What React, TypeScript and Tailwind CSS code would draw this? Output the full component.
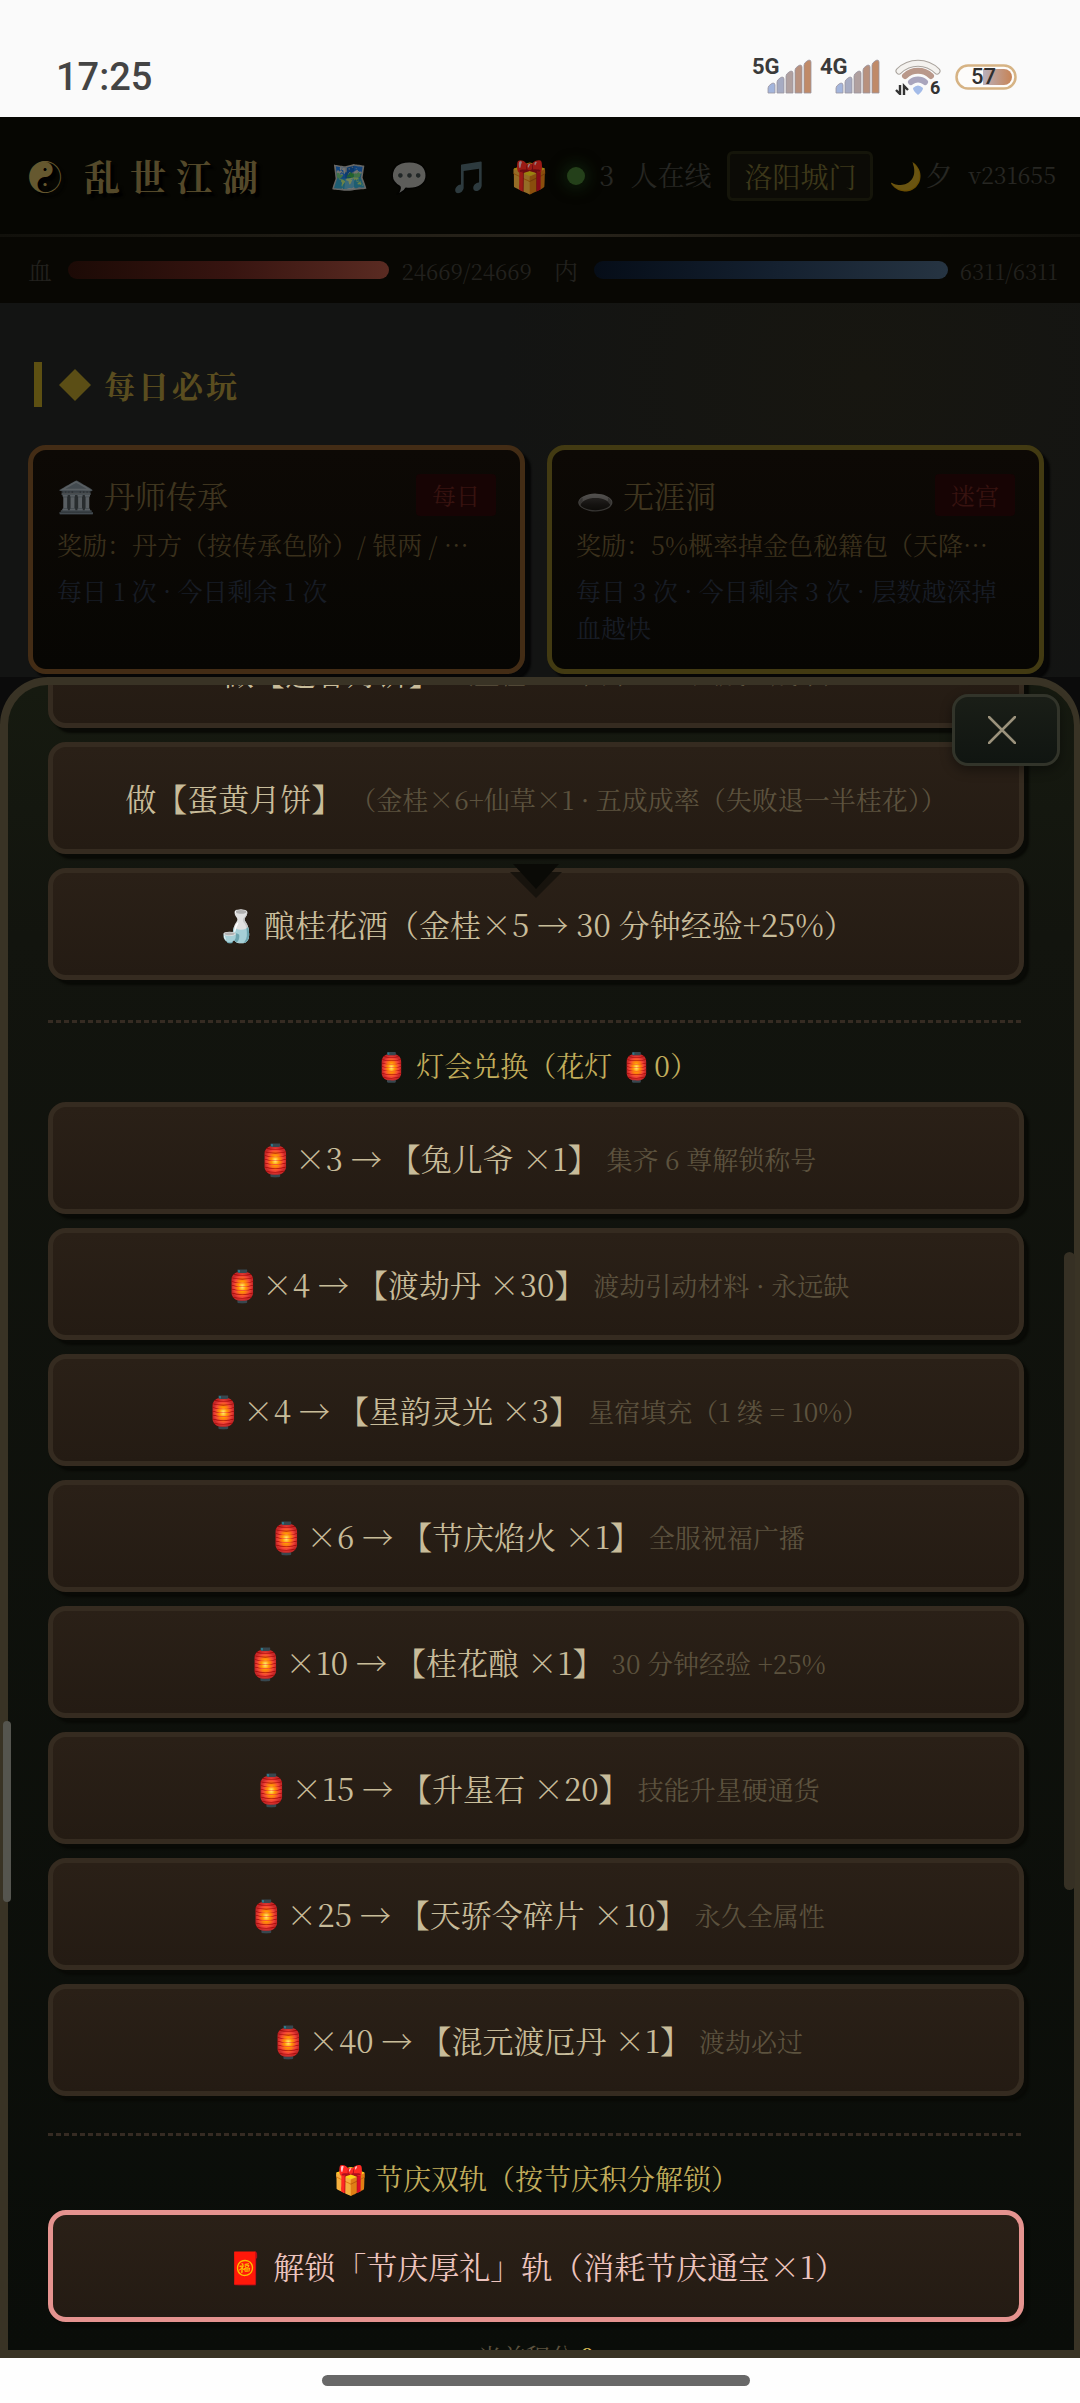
import type { ReactNode } from "react";

interface Offer {
  cost: string;
  reward: string;
  note: string;
}

const OFFERS: Offer[] = [
  { cost: "×3", reward: "兔儿爷 ×1", note: "集齐 6 尊解锁称号" },
  { cost: "×4", reward: "渡劫丹 ×30", note: "渡劫引动材料 · 永远缺" },
  { cost: "×4", reward: "星韵灵光 ×3", note: "星宿填充（1 缕 = 10%）" },
  { cost: "×6", reward: "节庆焰火 ×1", note: "全服祝福广播" },
  { cost: "×10", reward: "桂花酿 ×1", note: "30 分钟经验 +25%" },
  { cost: "×15", reward: "升星石 ×20", note: "技能升星硬通货" },
  { cost: "×25", reward: "天骄令碎片 ×10", note: "永久全属性" },
  { cost: "×40", reward: "混元渡厄丹 ×1", note: "渡劫必过" },
];

const SIGNAL_BARS = [
  { color: "#a3b5dc", top: 25 },
  { color: "#a6abc2", top: 19 },
  { color: "#b0a09f", top: 13 },
  { color: "#b8917e", top: 7 },
  { color: "#c08a68", top: 2 },
];

function Signal({ label }: { label: string }) {
  return (
    <div className="relative h-9 w-[60px] font-['Roboto',sans-serif] text-[#3a3a3a]">
      <svg viewBox="0 0 60 36" className="h-9 w-[60px]" aria-hidden="true">
        {SIGNAL_BARS.map(({ color, top }, i) => {
          const x = 16 + i * 9;
          return (
            <path
              key={color}
              d={`M${x} 34 V${top + 4} Q${x} ${top + 2} ${x + 3} ${top} L${x + 5} ${top - 1} Q${x + 7} ${top - 1} ${x + 7} ${top + 1} V34 Z`}
              fill={color}
              stroke="#9a94a0"
              strokeWidth="0.8"
            />
          );
        })}
      </svg>
      <span className="absolute -top-1 left-0 text-[22px] leading-6 font-bold">{label}</span>
    </div>
  );
}

function Wifi() {
  return (
    <div className="relative h-9 w-[46px] font-['Roboto',sans-serif] text-[#333]">
      <svg viewBox="0 0 46 36" className="h-9 w-[46px]" role="img" aria-label="Wi-Fi">
        <path d="M4 12 A27 27 0 0 1 42 12" fill="none" stroke="#aaa49e" strokeWidth="7" strokeLinecap="round" />
        <path d="M4 12 A27 27 0 0 1 42 12" fill="none" stroke="#f4f2ef" strokeWidth="5" strokeLinecap="round" />
        <path d="M10 17 A19 19 0 0 1 36 17" fill="none" stroke="#b9988a" strokeWidth="6" strokeLinecap="round" />
        <path d="M16 23 A11 11 0 0 1 30 23" fill="none" stroke="#a9a5bd" strokeWidth="6" strokeLinecap="round" />
        <path d="M18 29 Q23 24 28 29 Q28 32 23 36 Q18 32 18 29 Z" fill="#a3bbe8" />
        <path d="M5 26 V35 L1 31 M9 36 V27 L13 31" fill="none" stroke="#333" strokeWidth="2.4" />
      </svg>
      <span className="absolute top-[19px] left-[35px] text-lg leading-5 font-bold">6</span>
    </div>
  );
}

function Battery() {
  return (
    <div className="relative h-[26px] w-[62px] font-['Roboto',sans-serif] text-[#2f2f2f]">
      <svg viewBox="0 0 62 26" className="h-[26px] w-[62px]" aria-hidden="true">
        <defs>
          <linearGradient id="charge">
            <stop offset="0" stopColor="#b9b0bb" />
            <stop offset="1" stopColor="#c78355" />
          </linearGradient>
        </defs>
        <rect x="1.5" y="1.5" width="59" height="23" rx="11.5" fill="#fdfcfa" stroke="#d6b384" strokeWidth="2.5" />
        <path d="M28 5 H49 A8 8 0 0 1 49 21 H28 Z" fill="url(#charge)" />
      </svg>
      <span className="absolute top-0 left-4 text-[22px] leading-[25px] font-medium">57</span>
    </div>
  );
}

function StatusBar() {
  return (
    <div className="flex h-[117px] shrink-0 items-center justify-between bg-[#fafafa] pt-9 pr-[63px] pl-14">
      <span className="font-['Roboto',sans-serif] text-[38px] leading-none font-medium text-[#444]">17:25</span>
      <div className="flex items-center">
        <Signal label="5G" />
        <span className="w-2" />
        <Signal label="4G" />
        <span className="w-[15px]" />
        <Wifi />
        <span className="w-[14px]" />
        <Battery />
      </div>
    </div>
  );
}

function Header() {
  return (
    <header className="shrink-0 bg-[#060602]">
      <div className="flex h-[117px] items-center justify-between pr-6 pl-7">
        <h1 className="flex items-center gap-[22px] text-4xl font-bold text-[#54492a] [text-shadow:4px_4px_2px_#000]">
          <span className="text-[34px] font-normal text-[#65582f]">☯</span>
          <span className="tracking-[10px]">乱世江湖</span>
        </h1>
        <div className="flex items-center text-[27px] whitespace-nowrap text-[#272723]">
          <nav className="flex gap-[21px] text-[31px]">
            <button type="button" aria-label="地图" className="opacity-50">🗺️</button>
            <button type="button" aria-label="聊天" className="opacity-35">💬</button>
            <button type="button" aria-label="音乐" className="opacity-50">🎵</button>
            <button type="button" aria-label="礼包" className="opacity-60">🎁</button>
          </nav>
          <span className="ml-[18px] size-[18px] rounded-full bg-[#24401a] shadow-[0_0_14px_4px_#0d1c0a]" />
          <span className="ml-[14px]">3</span>
          <span className="ml-4">人在线</span>
          <button
            type="button"
            className="ml-4 rounded-md border-[3px] border-[#15150a] bg-[#0c0b06] px-[14px] text-[28px] leading-[44px] text-[#3d381a]"
          >
            洛阳城门
          </button>
          <span className="ml-4 flex items-center gap-[2px]">
            <span className="opacity-40">🌙</span>
            <span>夕</span>
          </span>
          <span className="ml-4 text-[23px]">v231655</span>
        </div>
      </div>
      <div className="h-[3px] bg-linear-to-r from-[#11100b] via-[#29241b] to-[#11100b]" />
    </header>
  );
}

function Vitals() {
  return (
    <div className="flex h-[66px] shrink-0 items-center gap-[22px] bg-[#080703] pr-[22px] pl-7 text-[22px] text-[#22211e]">
      <div className="flex flex-[503] items-center">
        <span className="text-2xl">血</span>
        <div className="ml-4 h-[18px] flex-1 rounded-full bg-linear-to-r from-[#1c0a06] via-[#371410] to-[#5a2b22]" />
        <span className="ml-3">24669/24669</span>
      </div>
      <div className="flex flex-[503] items-center">
        <span className="text-2xl">内</span>
        <div className="ml-4 h-[18px] flex-1 rounded-full bg-linear-to-r from-[#060d18] via-[#14202f] to-[#263442]" />
        <span className="ml-3">6311/6311</span>
      </div>
    </div>
  );
}

interface DailyCardProps {
  icon: string;
  title: string;
  tag: string;
  reward: string;
  limit: string;
  frame: string;
}

function DailyCard({ icon, title, tag, reward, limit, frame }: DailyCardProps) {
  return (
    <article
      className={`h-[229px] min-w-0 flex-1 rounded-[18px] border-[5px] bg-linear-to-b from-[#0d0905] to-[#070603] px-6 pt-6 shadow-[6px_6px_2px_#060606] ${frame}`}
    >
      <div className="flex items-center justify-between">
        <h3 className="flex items-center gap-2 text-[31px] leading-[42px] text-[#3f351f]">
          <span className="opacity-40">{icon}</span>
          {title}
        </h3>
        <span className="rounded bg-[#170404] px-4 text-2xl leading-[42px] text-[#381310]">{tag}</span>
      </div>
      <p className="mt-[10px] mr-3 truncate text-[25px] leading-9 text-[#3a301c]">{reward}</p>
      <p className="mt-[10px] text-[25px] leading-[37px] text-[#181d26]">{limit}</p>
    </article>
  );
}

function DailySection() {
  return (
    <main className="shrink-0 bg-[#131413] bg-[radial-gradient(circle_at_80%_20%,#171610,transparent_40%)] pr-9 pb-[3px] pl-7">
      <div className="flex items-center pt-[59px] pl-[6px]">
        <span className="h-[45px] w-2 bg-[#5d5012]" />
        <svg viewBox="0 0 32 32" className="ml-[17px] size-8" aria-hidden="true">
          <path d="M16 0 L32 16 L16 32 L0 16 Z" fill="#5b4e15" />
        </svg>
        <h2 className="ml-[13px] text-[31px] leading-[45px] font-bold tracking-[3px] text-[#5a4d1f]">每日必玩</h2>
      </div>
      <div className="mt-[38px] flex gap-[22px]">
        <DailyCard
          icon="🏛️"
          title="丹师传承"
          tag="每日"
          reward="奖励：丹方（按传承色阶）/ 银两 / 丹药材料"
          limit="每日 1 次 · 今日剩余 1 次"
          frame="border-[#432c15]"
        />
        <DailyCard
          icon="🕳️"
          title="无涯洞"
          tag="迷宫"
          reward="奖励：5%概率掉金色秘籍包（天降秘籍）"
          limit="每日 3 次 · 今日剩余 3 次 · 层数越深掉血越快"
          frame="border-[#423a12]"
        />
      </div>
    </main>
  );
}

function ActionButton({ children, tone = "border-[#352b20] text-[#c8bc9a]" }: { children: ReactNode; tone?: string }) {
  return (
    <button
      type="button"
      className={`flex h-28 w-full shrink-0 items-center justify-center rounded-[18px] border-[5px] bg-linear-to-b from-[#2a2017] to-[#241b13] text-[31px] whitespace-pre shadow-[5px_5px_2px_#090a06] ${tone}`}
    >
      {children}
    </button>
  );
}

function Note({ children }: { children: ReactNode }) {
  return <span className="ml-2 text-[26px] text-[#5c523e]">{children}</span>;
}

function Divider() {
  return <div role="separator" className="h-[3px] bg-[repeating-linear-gradient(90deg,#352b22_0_5px,transparent_5px_8px)]" />;
}

function FestivalSheet() {
  return (
    <section
      role="dialog"
      aria-label="节庆兑换"
      className="relative min-h-0 flex-1 rounded-t-[48px] border-8 border-r-[6px] border-[#393325] bg-linear-to-b from-[#161a10] via-[#12140e] via-15% to-[#0a0d09]"
    >
      <div className="h-full overflow-hidden pr-[50px] pl-10">
        <div className="-mt-[69px] flex flex-col gap-[14px]">
          <ActionButton>
            做【莲蓉月饼】<Note>（金桂×4+仙草×1 · 八成五成率）</Note>
          </ActionButton>
          <ActionButton>
            做【蛋黄月饼】<Note>（金桂×6+仙草×1 · 五成成率（失败退一半桂花））</Note>
          </ActionButton>
          <ActionButton>🍶 酿桂花酒（金桂×5 → 30 分钟经验+25%）</ActionButton>
        </div>

        <div className="mt-10">
          <Divider />
          <h2 className="mt-[21px] mb-4 text-center text-[28px] leading-[42px] text-[#c3ae5c]">
            🏮 灯会兑换（花灯 🏮0）
          </h2>
          <div className="flex flex-col gap-[14px]">
            {OFFERS.map((offer) => (
              <ActionButton key={offer.reward}>
                {`🏮${offer.cost} → 【${offer.reward}】`}
                <Note>{offer.note}</Note>
              </ActionButton>
            ))}
          </div>
        </div>

        <div className="mt-[37px]">
          <Divider />
          <h2 className="mt-[21px] mb-[11px] text-center text-[28px] leading-[42px] text-[#c3ae5c]">
            🎁 节庆双轨（按节庆积分解锁）
          </h2>
          <ActionButton tone="border-[#e5938f] text-[#ecc3bd]">🧧 解锁「节庆厚礼」轨（消耗节庆通宝×1）</ActionButton>
          <p className="mt-4 text-center text-2xl leading-9 text-[#5c523e]">
            当前积分 <b className="font-bold text-[#d8bd58]">0</b>
          </p>
        </div>
      </div>

      <svg viewBox="0 0 52 34" className="absolute top-[179px] left-1/2 -ml-[5px] h-[34px] w-[52px] -translate-x-1/2" aria-hidden="true">
        <path d="M0 8 H52 L26 34 Z" fill="#17130d" />
        <path d="M3 0 H49 L26 25 Z" fill="#0a0a06" />
      </svg>

      <button
        type="button"
        aria-label="关闭"
        className="absolute top-[9px] right-[14px] flex h-[72px] w-[108px] items-center justify-center rounded-2xl border-[3px] border-[#32342a] bg-linear-to-b from-[#1a1e17] to-[#101511] shadow-[0_4px_12px_#00000066]"
      >
        <svg viewBox="0 0 28 28" className="mr-2 size-7" aria-hidden="true">
          <path d="M1 1 L27 27 M27 1 L1 27" stroke="#9b927c" strokeWidth="2.5" strokeLinecap="round" />
        </svg>
      </button>

      <span className="absolute top-[567px] -right-px h-[638px] w-[11px] rounded-full bg-[#363024]" />
      <span className="absolute top-[1036px] -left-[5px] h-[181px] w-2 rounded-full bg-[#55554f]" />
    </section>
  );
}

export default function App() {
  return (
    <div
      lang="zh-CN"
      className="flex h-screen flex-col overflow-hidden bg-[#0b0b0b] font-['Noto_Serif_CJK_SC','Liberation_Serif','Noto_Sans_CJK_SC',serif]"
    >
      <StatusBar />
      <Header />
      <Vitals />
      <DailySection />
      <FestivalSheet />
      <div className="flex h-[45px] shrink-0 items-center justify-center bg-[#fefefe] pr-2">
        <span className="h-[11px] w-2/5 rounded-full bg-[#686868]" />
      </div>
    </div>
  );
}
